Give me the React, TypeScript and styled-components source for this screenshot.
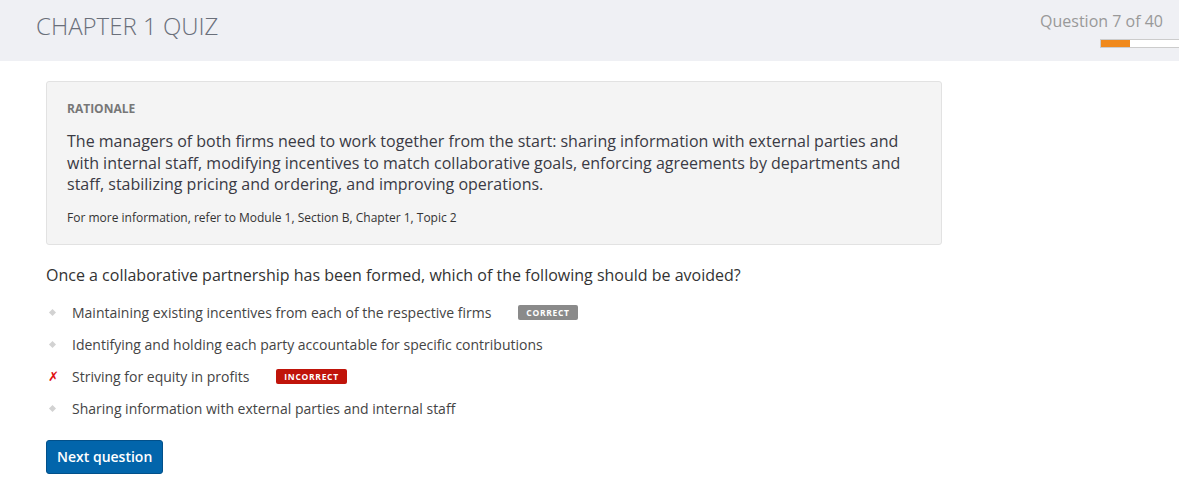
import React from "react";
import styled, { createGlobalStyle } from "styled-components";

const Global = createGlobalStyle`
  html, body { margin: 0; padding: 0; background: #fff; }
  body { font-family: "Open Sans", "Liberation Sans", sans-serif; color: #333; }
`;

const Header = styled.header`
  height: 61px;
  background: #eff0f4;
  display: flex;
  justify-content: space-between;
  align-items: flex-start;
  padding-left: 36px;
`;

const Title = styled.h1`
  margin: 9px 0 0;
  font-size: 24px;
  font-weight: 300;
  color: #6a6f7a;
  letter-spacing: 0;
`;

const Progress = styled.div`
  display: flex;
  flex-direction: column;
  align-items: flex-end;
  padding-top: 10px;
`;

const ProgressLabel = styled.div`
  font-size: 16px;
  color: #999;
  margin-right: 16px;
  line-height: 22px;
`;

const Track = styled.div`
  margin-top: 7px;
  width: 78px;
  height: 7px;
  background: #fff;
  border: 1px solid #ccc;
  border-right: none;
  display: flex;
`;

const Fill = styled.div`
  background: #f0891c;
  height: 100%;
`;

const Main = styled.main`
  padding: 20px 0 0 46px;
  width: 896px;
`;

const Rationale = styled.section`
  background: #f4f4f4;
  border: 1px solid #e2e2e2;
  border-radius: 3px;
  padding: 19px 20px 18px;
`;

const RationaleLabel = styled.div`
  font-size: 12px;
  font-weight: 700;
  color: #777;
  line-height: 16px;
`;

const RationaleText = styled.p`
  margin: 14px 0 0;
  font-size: 16px;
  line-height: 21.5px;
  color: #3a3a44;
`;

const MoreInfo = styled.p`
  margin: 14px 0 0;
  font-size: 12px;
  line-height: 16px;
  color: #333;
`;

const Question = styled.p`
  margin: 19px 0 0;
  font-size: 16px;
  line-height: 22px;
  color: #333;
`;

const Options = styled.ul`
  list-style: none;
  margin: 17px 0 0;
  padding: 0;
  display: flex;
  flex-direction: column;
  gap: 13px;
`;

const Option = styled.li`
  display: flex;
  align-items: center;
  height: 19px;
  font-size: 14px;
  color: #444;
`;

const Marker = styled.span`
  width: 26px;
  display: flex;
  align-items: center;
  padding-left: 2px;
  box-sizing: border-box;
`;

const Diamond = styled.span`
  width: 5px;
  height: 5px;
  margin-left: 2px;
  background: #d2d2d2;
  transform: rotate(45deg);
`;

const Cross = styled.span`
  color: #e01010;
  font-size: 13px;
  font-weight: 700;
  font-family: "DejaVu Sans", sans-serif;
`;

const Badge = styled.span<{ $tone: "correct" | "incorrect" }>`
  margin-left: 27px;
  height: 15px;
  padding: 0 8px;
  display: inline-flex;
  align-items: center;
  border-radius: 2px;
  font-size: 8.5px;
  font-weight: 700;
  letter-spacing: 0.7px;
  color: #fff;
  background: ${(p) => (p.$tone === "correct" ? "#8a8a8a" : "#c0140a")};
`;

const NextButton = styled.button`
  margin-top: 22px;
  height: 34px;
  padding: 0 10px;
  background: #0265ab;
  border: 1px solid #02508a;
  border-radius: 3px;
  color: #fff;
  font-family: "Open Sans", "Liberation Sans", sans-serif;
  font-size: 14px;
  font-weight: 600;
  cursor: pointer;
`;

type Opt = { text: string; badge?: "correct" | "incorrect"; wrong?: boolean };

const options: Opt[] = [
  { text: "Maintaining existing incentives from each of the respective firms", badge: "correct" },
  { text: "Identifying and holding each party accountable for specific contributions" },
  { text: "Striving for equity in profits", badge: "incorrect", wrong: true },
  { text: "Sharing information with external parties and internal staff" },
];

export default function App() {
  return (
    <>
      <Global />
      <Header>
        <Title>CHAPTER 1 QUIZ</Title>
        <Progress>
          <ProgressLabel>Question 7 of 40</ProgressLabel>
          <Track>
            <Fill style={{ width: `${(7 / 40) * 100 * 2.1}%` }} />
          </Track>
        </Progress>
      </Header>
      <Main>
        <Rationale>
          <RationaleLabel>RATIONALE</RationaleLabel>
          <RationaleText>
            The managers of both firms need to work together from the start: sharing information with external parties and
            with internal staff, modifying incentives to match collaborative goals, enforcing agreements by departments and
            staff, stabilizing pricing and ordering, and improving operations.
          </RationaleText>
          <MoreInfo>For more information, refer to Module 1, Section B, Chapter 1, Topic 2</MoreInfo>
        </Rationale>
        <Question>Once a collaborative partnership has been formed, which of the following should be avoided?</Question>
        <Options>
          {options.map((o) => (
            <Option key={o.text}>
              <Marker>{o.wrong ? <Cross>✗</Cross> : <Diamond />}</Marker>
              {o.text}
              {o.badge && <Badge $tone={o.badge}>{o.badge === "correct" ? "CORRECT" : "INCORRECT"}</Badge>}
            </Option>
          ))}
        </Options>
        <NextButton>Next question</NextButton>
      </Main>
    </>
  );
}
